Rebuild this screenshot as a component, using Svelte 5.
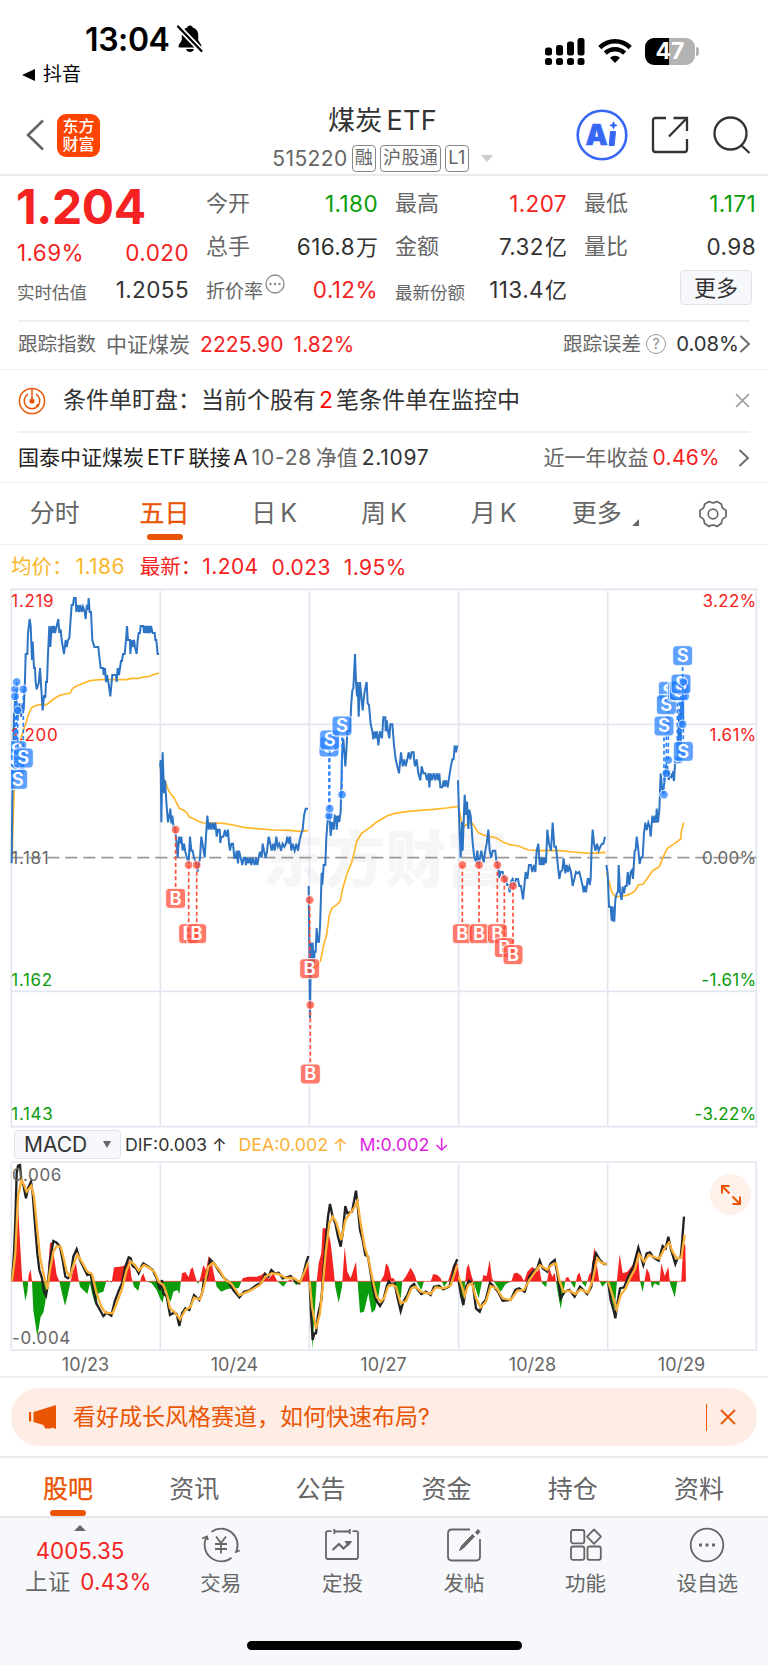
<script>
  const quotes = [
    [
      { label: '今开', value: '1.180', tone: 'down' },
      { label: '总手', value: '616.8', unit: '万' },
      { label: '折价率', value: '0.12%', tone: 'up', info: true }
    ],
    [
      { label: '最高', value: '1.207', tone: 'up' },
      { label: '金额', value: '7.32', unit: '亿' },
      { label: '最新份额', value: '113.4', unit: '亿' }
    ],
    [
      { label: '最低', value: '1.171', tone: 'down' },
      { label: '量比', value: '0.98' }
    ]
  ];

  const bottomTabs = ['股吧', '资讯', '公告', '资金', '持仓', '资料'];
  const dates = ['10/23', '10/24', '10/27', '10/28', '10/29'];

  let period = '五日';
  let section = '股吧';

  // Chart coordinates are in thirds of a pixel, one polyline per session
  const dayLines = [481, 928, 1376, 1823];

  const price = [
    '35,850 37,660 42,400 48,330 52,420 58,370 63,410 68,370 71,391 75,300 77,222 82,222 84,159 89,117 92,138 96,240 98,185 102,264 105,264 107,306 110,328 116,310 120,264 124,328 128,391 132,349 136,350 138,306 141,306 144,222 148,138 151,201 155,138 158,159 162,138 165,159 170,138 175,117 178,159 182,148 185,180 192,222 197,180 200,201 204,180 208,175 212,117 215,75 219,75 222,54 227,54 229,96 233,75 237,96 241,75 245,96 249,80 254,96 257,117 260,80 264,85 266,54 269,96 273,96 277,180 283,201 295,201 297,222 302,264 309,264 311,285 315,264 318,306 321,285 325,306 331,349 337,285 348,285 350,306 353,264 357,285 360,264 363,243 366,243 369,222 374,222 378,180 381,138 384,180 390,180 391,222 395,180 398,201 402,180 405,201 410,222 413,180 416,159 420,159 422,138 430,138 432,159 435,138 438,159 441,138 444,159 447,138 450,159 453,138 458,159 464,159 466,180 469,180 473,222 477,222',
    '480,560 482,540 484,727 488,517 492,640 495,601 500,680 504,727 508,707 511,686 514,730 517,707 520,735 523,740 528,770 533,833 537,770 541,791 544,770 548,812 552,791 556,815 561,833 566,850 570,770 574,812 578,812 582,833 588,850 593,875 600,833 604,770 609,800 614,833 618,770 622,707 626,749 630,728 634,749 638,728 642,749 646,728 650,770 654,749 659,749 661,789 664,770 670,770 675,750 679,770 684,749 687,791 690,812 694,791 699,791 703,833 707,833 710,812 714,850 717,812 722,833 727,855 731,833 735,833 738,855 742,833 746,850 750,833 754,855 758,833 764,855 768,833 772,855 776,833 780,815 785,833 788,791 792,812 797,833 801,815 806,770 811,791 815,812 820,791 824,812 829,770 833,800 838,791 843,812 848,791 853,800 858,791 862,770 866,791 870,770 874,812 878,791 884,812 889,791 894,812 899,780 904,760 908,749 912,707 917,686 924,686',
    '926,918 929,1220 930,1315 933,1088 936,1157 938,1088 941,1157 944,1115 947,1115 950,1044 953,1085 957,1085 960,1041 962,980 965,878 967,914 971,855 976,855 979,772 984,710 988,694 992,768 996,726 1001,749 1004,707 1008,710 1010,749 1014,707 1018,726 1022,694 1024,620 1026,525 1030,475 1032,505 1036,559 1039,515 1042,454 1050,452 1054,368 1057,331 1060,326 1065,222 1068,305 1071,349 1073,306 1076,410 1080,306 1084,349 1088,391 1092,349 1095,328 1100,306 1103,370 1107,375 1112,433 1117,454 1120,478 1124,454 1128,475 1131,454 1135,496 1140,454 1146,475 1150,412 1156,412 1157,454 1160,420 1164,454 1168,475 1171,433 1177,433 1182,495 1187,538 1192,559 1197,580 1203,517 1208,559 1213,538 1217,559 1222,538 1226,517 1231,538 1235,517 1241,517 1242,538 1245,559 1250,538 1255,580 1261,601 1265,559 1270,580 1276,580 1281,601 1286,580 1288,622 1292,580 1296,601 1301,580 1306,601 1310,580 1315,601 1318,580 1321,622 1327,622 1331,601 1334,620 1338,601 1343,622 1346,601 1352,562 1357,538 1361,538 1364,496 1368,517 1372,496',
    '1374,601 1378,736 1382,833 1386,726 1388,812 1391,726 1394,644 1398,705 1401,665 1405,747 1408,689 1412,707 1415,747 1418,789 1423,833 1428,843 1432,812 1436,855 1440,833 1444,812 1448,833 1451,847 1456,812 1460,791 1465,749 1469,812 1474,833 1478,812 1486,812 1489,843 1494,855 1498,894 1502,876 1508,876 1513,896 1517,896 1521,915 1526,915 1529,937 1533,905 1538,897 1543,918 1548,897 1554,897 1558,918 1563,918 1569,958 1573,918 1577,876 1582,897 1587,855 1593,855 1597,876 1602,855 1606,876 1610,812 1615,791 1619,855 1623,833 1625,855 1628,833 1631,855 1634,833 1638,850 1642,749 1647,791 1653,812 1658,728 1663,800 1668,800 1673,850 1678,897 1682,875 1687,870 1691,835 1696,880 1700,855 1704,876 1708,860 1713,876 1718,918 1723,897 1728,876 1733,880 1738,876 1743,897 1748,918 1751,937 1754,918 1758,937 1763,897 1766,897 1769,915 1772,897 1775,800 1778,749 1782,791 1786,812 1791,791 1796,812 1801,800 1806,791 1810,791 1815,770',
    '1819,855 1823,880 1827,980 1832,980 1835,1022 1838,980 1840,1022 1843,1022 1846,960 1850,940 1854,935 1856,855 1860,935 1865,960 1868,920 1872,940 1876,918 1880,918 1883,876 1888,915 1892,876 1896,870 1899,897 1904,812 1907,810 1910,770 1914,800 1919,852 1923,833 1928,830 1932,760 1936,728 1940,750 1945,728 1949,740 1952,770 1957,707 1962,728 1965,707 1968,728 1970,686 1974,727 1978,690 1982,580 1986,622 1989,640 1994,600 1998,560 2002,560 2006,600 2010,580 2014,590 2018,580 2022,603 2026,540 2032,540 2038,400 2042,500 2044,340 2048,300 2050,433'
  ];

  const average = [
    '37,830 38,770 42,640 46,570 55,510 62,480 70,450 78,430 85,405 95,383 105,377 120,374 140,374 150,366 165,354 180,346 195,342 210,340 218,325 230,318 250,310 270,302 300,299 340,299 380,299 395,295 415,295 430,291 445,290 460,284 477,279',
    '480,560 488,590 496,605 505,630 512,642 520,650 528,665 538,685 550,690 560,698 568,711 580,716 595,724 610,729 640,729 670,730 700,735 730,742 770,746 820,750 870,751 900,754 924,752',
    '930,1136 940,1163 952,1157 962,1141 970,1099 980,1063 988,1005 996,984 1008,976 1020,965 1028,926 1040,884 1055,847 1062,821 1070,784 1085,760 1110,742 1130,726 1150,715 1160,708 1185,700 1220,695 1260,691 1300,688 1340,684 1373,679',
    '1374,679 1380,700 1387,747 1395,737 1405,731 1416,729 1425,742 1435,758 1450,765 1470,770 1490,774 1510,787 1530,794 1555,798 1585,810 1620,812 1650,811 1680,812 1720,816 1770,820 1817,817',
    '1819,876 1826,900 1835,935 1845,950 1860,949 1880,946 1895,940 1905,932 1915,915 1930,912 1940,898 1958,872 1978,860 1990,830 2002,805 2020,793 2042,777 2044,755 2051,727'
  ];

  // x, y of the trade and y of its badge
  const trades = [
    { type: 'S', x: 45, y: 328, badge: 534 },
    { type: 'S', x: 45, y: 349, badge: 555 },
    { type: 'S', x: 50, y: 306, badge: 512 },
    { type: 'S', x: 53, y: 391, badge: 598 },
    { type: 'S', x: 70, y: 328, badge: 534 },
    { type: 'B', x: 527, y: 749, badge: 955 },
    { type: 'B', x: 566, y: 855, badge: 1061 },
    { type: 'B', x: 590, y: 855, badge: 1061 },
    { type: 'B', x: 929, y: 960, badge: 1166 },
    { type: 'B', x: 931, y: 1275, badge: 1482 },
    { type: 'S', x: 987, y: 707, badge: 501 },
    { type: 'S', x: 989, y: 686, badge: 480 },
    { type: 'S', x: 1026, y: 644, badge: 438 },
    { type: 'B', x: 1387, y: 855, badge: 1061 },
    { type: 'B', x: 1437, y: 855, badge: 1061 },
    { type: 'B', x: 1492, y: 855, badge: 1061 },
    { type: 'B', x: 1513, y: 897, badge: 1103 },
    { type: 'B', x: 1539, y: 918, badge: 1124 },
    { type: 'S', x: 2005, y: 540, badge: 334 },
    { type: 'S', x: 1999, y: 580, badge: 374 },
    { type: 'S', x: 1992, y: 644, badge: 438 },
    { type: 'S', x: 2032, y: 540, badge: 334 },
    { type: 'S', x: 2038, y: 538, badge: 332 },
    { type: 'S', x: 2043, y: 519, badge: 312 },
    { type: 'S', x: 2048, y: 433, badge: 227 },
    { type: 'S', x: 2050, y: 306, badge: 514 }
  ];

  const dif = [
    '36,484 42,400 46,300 50,160 54,137 60,135 64,180 70,195 78,235 84,205 93,185 98,220 104,300 112,400 118,450 126,475 132,515 138,527 144,490 150,420 160,363 170,368 180,380 188,420 196,470 204,475 212,465 220,410 230,388 240,420 252,445 262,465 272,462 280,510 290,552 300,570 310,588 320,578 334,587 344,545 355,515 366,490 376,440 386,412 392,415 398,438 408,445 416,460 424,440 430,430 442,438 458,450 470,475 480,510 486,480 490,520 500,530 510,585 522,578 530,582 538,618 546,580 556,565 568,570 582,525 598,540 606,520 612,480 620,475 630,418 642,430 655,450 670,472 685,485 700,510 718,532 732,515 750,510 770,495 785,488 795,462 805,470 814,450 824,460 836,458 848,475 860,472 872,468 885,482 898,490 908,470 918,430 925,408',
    '929,484 933,580 938,660 943,640 948,640 954,585 964,540 970,460 976,380 984,290 990,252 998,290 1006,310 1014,350 1022,380 1028,340 1036,258 1042,280 1056,275 1068,212 1072,245 1080,330 1088,360 1096,405 1104,410 1112,460 1120,510 1128,540 1140,558 1150,540 1160,500 1166,484 1174,492 1184,490 1192,530 1202,573 1210,545 1222,525 1232,500 1242,492 1254,510 1264,522 1277,515 1292,525 1302,500 1317,497 1330,508 1347,500 1355,480 1362,440 1372,418',
    '1376,484 1384,530 1390,555 1398,500 1407,482 1418,490 1428,565 1439,575 1448,550 1457,540 1470,488 1480,498 1494,515 1508,542 1532,540 1546,510 1557,505 1574,515 1588,470 1602,452 1612,445 1619,422 1628,445 1642,455 1652,430 1664,420 1672,460 1682,535 1694,515 1708,510 1724,530 1740,500 1762,522 1774,500 1780,430 1788,400 1800,420 1812,432 1820,432',
    '1824,484 1832,540 1842,575 1846,595 1852,550 1860,505 1872,502 1887,465 1900,440 1915,383 1930,435 1940,400 1950,397 1960,412 1976,422 1988,378 1997,385 2005,350 2012,385 2026,432 2032,415 2042,412 2046,370 2052,290'
  ];

  const dea = [
    '36,484 46,400 54,230 64,180 72,195 80,215 94,197 102,230 112,330 120,410 130,460 142,508 150,450 160,395 170,378 182,380 190,410 200,455 210,470 222,430 232,403 245,425 262,455 276,462 290,520 304,560 316,578 338,580 348,555 365,510 380,450 392,425 405,435 416,452 432,435 450,445 465,458 476,485 490,495 500,520 510,565 524,576 540,598 556,570 572,560 582,533 600,538 612,500 625,440 640,428 658,450 675,478 695,492 718,526 750,512 780,495 796,470 815,460 835,462 858,474 880,474 900,487 912,460 924,428',
    '929,484 936,560 948,626 960,580 968,500 978,390 988,310 998,290 1008,305 1024,360 1036,300 1050,280 1062,265 1072,243 1082,310 1094,380 1106,420 1118,480 1130,530 1142,545 1152,535 1164,500 1177,494 1188,500 1202,550 1218,543 1234,505 1247,500 1262,515 1292,522 1307,502 1332,505 1352,496 1362,465 1372,435',
    '1376,470 1386,500 1394,527 1404,495 1416,490 1428,535 1442,562 1458,545 1472,498 1490,505 1508,535 1532,540 1552,512 1572,510 1588,480 1602,460 1620,435 1642,450 1654,435 1668,430 1678,480 1690,515 1708,512 1726,522 1742,508 1764,518 1778,480 1792,415 1804,428 1820,433',
    '1824,484 1836,520 1850,568 1862,525 1877,505 1892,470 1904,450 1917,403 1932,425 1947,405 1964,412 1978,416 1992,388 2007,368 2018,395 2030,415 2044,412 2054,345'
  ];

  const histogram = '36,484 44,380 52,220 58,330 66,470 70,500 76,542 82,515 86,465 92,448 96,484 100,570 112,650 122,590 130,578 136,545 142,484 150,370 157,366 162,410 170,465 178,484 186,520 195,557 202,530 212,484 220,450 228,430 234,470 240,500 252,512 262,522 270,490 276,520 286,555 295,520 310,515 320,480 335,488 342,442 360,440 378,436 388,420 394,470 402,500 415,512 424,470 430,460 438,484 455,490 470,510 480,535 488,548 495,510 512,545 520,515 532,510 538,522 546,460 556,456 566,472 572,448 578,442 586,470 594,494 602,470 610,435 618,450 626,408 634,420 642,465 650,500 664,515 680,508 700,504 716,505 728,475 745,470 770,470 785,465 795,455 805,478 820,460 832,484 850,500 862,484 872,478 890,496 905,478 918,450 925,430 929,484 933,600 937,688 943,590 950,484 956,430 964,400 968,325 978,325 986,340 992,370 1000,440 1006,500 1016,548 1026,500 1034,380 1042,455 1052,475 1060,450 1068,425 1074,500 1080,578 1092,575 1105,520 1115,578 1125,570 1135,530 1142,484 1152,465 1158,430 1166,440 1174,475 1182,475 1190,510 1202,535 1207,484 1217,470 1232,443 1244,465 1252,490 1264,510 1272,484 1292,484 1300,462 1312,465 1322,475 1332,500 1344,484 1352,460 1360,435 1372,430 1380,484 1387,565 1394,500 1400,445 1406,432 1414,465 1422,490 1436,535 1444,495 1450,465 1460,468 1469,420 1476,475 1484,488 1502,515 1517,492 1534,484 1542,460 1552,458 1564,468 1572,484 1582,455 1597,440 1612,455 1618,445 1626,490 1638,502 1648,445 1657,470 1664,458 1672,510 1682,567 1690,520 1697,475 1704,470 1714,490 1724,505 1732,465 1739,458 1747,490 1757,500 1767,465 1774,455 1783,380 1790,430 1797,480 1807,500 1818,488 1824,484 1832,530 1844,570 1852,470 1859,403 1868,460 1882,455 1902,430 1914,400 1920,484 1928,516 1934,480 1940,445 1948,460 1956,505 1964,490 1978,497 1984,430 1994,468 2005,440 2010,490 2024,532 2032,484 2044,484 2050,370 2056,375 2058,484';
</script>

<div class="app">
  <header class="status">
    <div class="status-left">
      <div class="clock">
        <span>13:04</span>
        <svg width="28" height="30" viewBox="0 0 28 30">
          <path d="M14 1.500c-1.800 0-2.600 1.100-2.700 2.100C7.500 4.700 5.800 7.600 5.800 11v4.500c0 2-3.300 4.200-3.300 6.700 0 .9.700 1.300 1.500 1.300h20c.8 0 1.500-.4 1.500-1.300 0-2.500-3.300-4.700-3.300-6.700V11c0-3.400-1.700-6.300-5.500-7.400-.1-1-.9-2.100-2.700-2.100z" />
          <path d="M10 25h8c-.5 2-2 3-4 3s-3.500-1-4-3z" />
          <path d="M2 2.500L25.500 27" stroke="#fff" stroke-width="5.500" />
          <path d="M2 2.500L25.500 27" stroke="#000" stroke-width="2.200" stroke-linecap="round" />
        </svg>
      </div>
      <div class="return"><i></i>抖音</div>
    </div>
    <div class="status-right">
      <svg width="40" height="28" viewBox="0 0 40 28">
        <rect x="0" y="9.500" width="7" height="8" rx="2.500" />
        <rect x="11" y="7" width="7" height="10.500" rx="2.500" />
        <rect x="22" y="3.500" width="7" height="14" rx="2.500" />
        <rect x="32.500" y="0" width="7" height="17.500" rx="2.500" />
        <rect x="0" y="20" width="7" height="7" rx="2.500" />
        <rect x="11" y="20" width="7" height="7" rx="2.500" />
        <rect x="22" y="20" width="7" height="7" rx="2.500" />
        <rect x="32.500" y="20" width="7" height="7" rx="2.500" />
      </svg>
      <svg class="wifi" width="34" height="26" viewBox="0 0 34 26" fill="none" stroke="#000" stroke-width="4.600">
        <path d="M1.800 9.600a21.500 21.500 0 0 1 30.400 0" />
        <path d="M7.400 15.200a13.600 13.600 0 0 1 19.200 0" />
        <path d="M17 25l-5-5.200a7 7 0 0 1 10 0z" fill="#000" stroke="none" />
      </svg>
      <div class="battery"><span>47</span></div>
      <i class="battery-cap"></i>
    </div>
  </header>

  <nav class="nav">
    <svg class="back" width="20" height="32" viewBox="0 0 20 32" fill="none" stroke="#666" stroke-width="2.600">
      <path d="M18 1.500L3 16l15 14.500" />
    </svg>
    <div class="logo"><span>东方</span><span>财富</span></div>
    <div class="title">
      <h1>煤炭 <span>ETF</span></h1>
      <p>515220 <b>融</b><b>沪股通</b><b>L1</b><i></i></p>
    </div>
    <svg width="52" height="52" viewBox="0 0 52 52">
      <circle cx="26" cy="26" r="24.300" fill="#fff" stroke="#3767f5" stroke-width="2.600" />
      <text class="ai" x="9.500" y="35.500">A</text>
      <path d="M34.500 22.500h5l-1.300 14h-5z" fill="#3767f5" stroke="#3767f5" stroke-linejoin="round" />
      <path d="M37.500 12l1.400 2.900 2.900 1.400-2.900 1.400-1.400 2.900-1.400-2.900-2.900-1.400 2.900-1.400z" fill="#3767f5" />
    </svg>
    <svg class="share" width="38" height="38" viewBox="0 0 38 38" fill="none" stroke="#333" stroke-width="2.300">
      <path d="M15 2H4.500Q2 2 2 4.500v29Q2 36 4.500 36h29q2.500 0 2.500-2.500V23" />
      <path d="M22.500 2H36v13M36 2L18 20.500" />
    </svg>
    <svg class="search" width="38" height="38" viewBox="0 0 38 38" fill="none" stroke="#333" stroke-width="2.300">
      <circle cx="17.500" cy="17.500" r="16" />
      <path d="M28 29l8.500 8" />
    </svg>
  </nav>

  <section class="quote">
    <div class="last">
      <strong>1.204</strong>
      <div class="pair up"><span>1.69%</span><span>0.020</span></div>
      <div class="pair"><em>实时估值</em><span>1.2055</span></div>
    </div>
    {#each quotes as column}
      <div class="column">
        {#each column as item}
          <div class="pair">
            <em class:mid={item.label.length === 3} class:small={item.label.length === 4}>
              {item.label}{#if item.info}<svg width="20" height="20" viewBox="0 0 20 20">
                  <circle cx="10" cy="10" r="9" fill="none" stroke="#888" stroke-width="1.300" />
                  <circle cx="5.500" cy="10" r="1.200" /><circle cx="10" cy="10" r="1.200" /><circle cx="14.500" cy="10" r="1.200" />
                </svg>{/if}
            </em>
            <span class={item.tone}>{item.value}{#if item.unit}<u>{item.unit}</u>{/if}</span>
          </div>
        {/each}
        {#if column.length === 2}
          <button class="more">更多</button>
        {/if}
      </div>
    {/each}
  </section>

  <section class="track">
    <span>跟踪指数</span>
    <span class="name">中证煤炭</span>
    <span class="num up">2225.90</span>
    <span class="num up">1.82%</span>
    <div class="right">
      <span>跟踪误差</span>
      <span class="help">?</span>
      <span class="num dark">0.08%</span>
      <svg width="12" height="18" viewBox="0 0 12 18" fill="none" stroke="#666" stroke-width="1.800"><path d="M1.500 1L10 9l-8.500 8" /></svg>
    </div>
  </section>

  <section class="alert">
    <svg width="28" height="28" viewBox="0 0 28 28" fill="none" stroke="#ea5504" stroke-width="1.500">
      <circle cx="14" cy="14" r="12.600" />
      <path d="M14 1.500v12M10 7.200a7.800 7.800 0 1 0 8 0" />
      <circle cx="14" cy="14" r="1.800" fill="#ea5504" />
      <circle cx="19.500" cy="18.500" r="1.500" fill="#ea5504" stroke="none" />
    </svg>
    <p>条件单盯盘：当前个股有<b>2</b>笔条件单在监控中</p>
    <svg width="15" height="15" viewBox="0 0 15 15" stroke="#999" stroke-width="1.600"><path d="M1 1l13 13M14 1L1 14" /></svg>
  </section>

  <section class="fund">
    <span class="fund-name">国泰中证煤炭 <i>ETF</i> 联接 <i>A</i></span>
    <span class="date">10-28</span>
    <span class="grey">净值</span>
    <span class="nav-value">2.1097</span>
    <div class="right">
      <span class="grey">近一年收益</span>
      <span class="up">0.46%</span>
      <svg width="12" height="18" viewBox="0 0 12 18" fill="none" stroke="#666" stroke-width="1.800"><path d="M1.500 1L10 9l-8.500 8" /></svg>
    </div>
  </section>

  <div class="tabs">
    {#each ['分时', '五日', '日 K', '周 K', '月 K', '更多'] as tab}
      <button class:active={period === tab} class:has-more={tab === '更多'} on:click={() => (period = tab)}>{tab}</button>
    {/each}
    <div class="gear">
      <svg width="30" height="30" viewBox="0 0 30 30" fill="none" stroke="#666" stroke-width="1.700" stroke-linejoin="round">
        <path d="M11 2.500q4 2.600 8 0l4.500 2.700q0 4.400 4.500 6v6.600q-4.500 1.600-4.500 6.500L19 27.500q-4-2.600-8 0l-4.500-3.200q0-4.900-4.500-6.500v-6.600q4.500-1.600 4.500-6z" />
        <circle cx="15" cy="15" r="4.800" />
      </svg>
    </div>
  </div>

  <div class="legend">
    <span class="avg">均价：<b>1.186</b></span>
    <span>最新：<b>1.204</b></span>
    <b>0.023</b>
    <b>1.95%</b>
  </div>

  <svg class="chart" width="768" height="540" viewBox="0 24 2304 1620">
    <text class="watermark" x="1155" y="905">东方财富</text>
    <g class="grid">
      <path d="M34 28H2269V1640H34z" />
      {#each dayLines as x}
        <path d="M{x} 33V1636" />
      {/each}
      <path d="M34 433H2269M34 1234H2269" />
    </g>
    <path d="M34 833H2269" stroke="#999" stroke-width="5" stroke-dasharray="36 18" />
    {#each average as points}
      <polyline {points} fill="none" stroke="#ffb629" stroke-width="5" />
    {/each}
    {#each price as points}
      <polyline {points} fill="none" stroke="#2d74c4" stroke-width="6" />
    {/each}
    <g class="axis">
      <text class="red" x="34" y="80">1.219</text>
      <text class="red" x="34" y="483">1.200</text>
      <text x="34" y="851">1.181</text>
      <text class="green" x="34" y="1217">1.162</text>
      <text class="green" x="34" y="1621">1.143</text>
    </g>
    <g class="axis end">
      <text class="red" x="2270" y="80">3.22%</text>
      <text class="red" x="2270" y="483">1.61%</text>
      <text x="2270" y="851">0.00%</text>
      <text class="green" x="2270" y="1217">-1.61%</text>
      <text class="green" x="2270" y="1621">-3.22%</text>
    </g>
    <clipPath id="plot"><rect x="33" y="24" width="2238" height="1620" /></clipPath>
    <g clip-path="url(#plot)">
      {#each trades as trade}
        <g class="trade {trade.type}">
          <path d="M{trade.x} {trade.y}V{trade.badge + (trade.badge > trade.y ? -30 : 30)}" />
          <circle cx={trade.x} cy={trade.y} r="13" />
          <rect x={trade.x - 30} y={trade.badge - 30} width="60" height="60" rx="11" />
          <text x={trade.x} y={trade.badge + 19}>{trade.type}</text>
        </g>
      {/each}
    </g>
  </svg>

  <div class="indicator">
    <button>MACD<i></i></button>
    <span>DIF:0.003</span><b>↑</b>
    <span class="dea">DEA:0.002</span><b class="dea">↑</b>
    <span class="macd">M:0.002</span><b class="macd">↓</b>
  </div>

  <div class="macd-wrap">
    <svg width="768" height="190" viewBox="0 123 2304 570">
      <g class="grid">
        <path d="M34 126H2269V691H34z" />
        {#each dayLines as x}
          <path d="M{x} 132V688" />
        {/each}
      </g>
      <clipPath id="above"><rect x="0" y="123" width="2304" height="361" /></clipPath>
      <clipPath id="below"><rect x="0" y="484" width="2304" height="209" /></clipPath>
      <polygon points={histogram} fill="#f52222" clip-path="url(#above)" />
      <polygon points={histogram} fill="#0a9c0a" clip-path="url(#below)" />
      <path d="M36 484H2058" stroke="#f52222" stroke-width="2" />
      {#each dif as points}
        <polyline {points} fill="none" stroke="#222" stroke-width="7" />
      {/each}
      {#each dea as points}
        <polyline {points} fill="none" stroke="#f9b036" stroke-width="7" />
      {/each}
      <g class="axis">
        <text x="36" y="184">0.006</text>
        <text x="36" y="672">-0.004</text>
      </g>
    </svg>
    <div class="expand">
      <svg width="22" height="22" viewBox="0 0 22 22" fill="none" stroke="#ea5504" stroke-width="2">
        <path d="M9.500 2H2v7.500M2 2l7.500 7.500M12.500 20H20v-7.500M20 20l-7.500-7.500" />
      </svg>
    </div>
  </div>

  <div class="dates">
    {#each dates as date}
      <span>{date}</span>
    {/each}
  </div>

  <div class="banner-wrap">
    <div class="banner">
      <svg width="28" height="24" viewBox="0 0 28 24" fill="#ea5504">
        <path d="M0 7h2.200v9.500H0zM4.500 7L27 0v24l-4-1.500-1 1h-6l-1.500-3.500L4.500 17z" />
      </svg>
      <span>看好成长风格赛道，如何快速布局?</span>
      <i></i>
      <svg width="16" height="16" viewBox="0 0 16 16" stroke="#ea5504" stroke-width="1.800"><path d="M1 1l14 14M15 1L1 15" /></svg>
    </div>
  </div>

  <div class="sections">
    {#each bottomTabs as tab}
      <button class:active={section === tab} on:click={() => (section = tab)}>{tab}</button>
    {/each}
  </div>

  <footer>
    <div class="actions">
      <div class="index">
        <i></i>
        <span class="up">4005.35</span>
        <p>上证 <span class="up">0.43%</span></p>
      </div>
      <div class="action">
        <svg width="40" height="36" viewBox="0 0 40 36">
          <path d="M1.200 11.500l4.800-2L7 13M5.800 9.700A16.500 16.500 0 0 0 30.500 30.700M10.500 4.700A16.500 16.500 0 0 1 35.300 24.500M33.800 25.500l5-2" />
          <path d="M15 9.500l5 6.500 5-6.500M20 16v10.500M14 17h12M14 22h12" />
        </svg>
        <span>交易</span>
      </div>
      <div class="action">
        <svg width="40" height="36" viewBox="0 0 40 36">
          <path d="M9.500 4.200H6Q4 4.200 4 6v24q0 2 2 2h28q2 0 2-2V6q0-1.800-2-1.800h-3.500M12.300 4.500h15.400M12.300 2v5M27.700 2v5" />
          <path d="M10.500 23l6.500-6 4.500 4.500 7.500-7" stroke-width="2.200" />
          <path d="M22.500 14h7.500l-4 5.500z" fill="#666" stroke="none" />
        </svg>
        <span>定投</span>
      </div>
      <div class="action">
        <svg width="40" height="36" viewBox="0 0 40 36">
          <path d="M26 2.500H8Q4 2.500 4 6.500v23q0 4 4 4h24q4 0 4-4V12" />
          <path d="M15.500 23.500l2-4.500 11-11.500 2 2-11 11.500zM31.500 5.500l2.500-3 2 2-2.500 3z" fill="#666" stroke-width="1" />
        </svg>
        <span>发帖</span>
      </div>
      <div class="action">
        <svg width="40" height="36" viewBox="0 0 40 36">
          <rect x="5" y="3" width="13.300" height="13.300" rx="2" />
          <rect x="5" y="19.500" width="13.300" height="13.300" rx="2" />
          <rect x="21.500" y="19.500" width="13.300" height="13.300" rx="2" />
          <path d="M28 2.500l7 7.200-7 7.200-7-7.200z" stroke-linejoin="round" />
        </svg>
        <span>功能</span>
      </div>
      <div class="action">
        <svg width="40" height="36" viewBox="0 0 40 36">
          <circle cx="20" cy="18" r="16.300" />
          <path d="M12 18h3M18.500 18h3M25 18h3" stroke-width="3" />
        </svg>
        <span>设自选</span>
      </div>
    </div>
    <div class="home"></div>
  </footer>
</div>

<style>
  :global(body) {
    margin: 0;
    background: #fff;
  }

  .app {
    width: 768px;
    height: 1665px;
    overflow: hidden;
    display: flex;
    flex-direction: column;
    background: #fff;
    color: #333;
    font-family: Inter, "Noto Sans CJK SC", sans-serif;
    font-size: 21px;
    line-height: 1;
  }

  .app > * {
    box-sizing: border-box;
    flex-shrink: 0;
  }

  svg {
    display: block;
    flex-shrink: 0;
  }

  button {
    font: inherit;
    color: inherit;
    background: none;
    border: 0;
    padding: 0;
  }

  p, h1 {
    margin: 0;
    font-weight: 400;
  }

  i, em {
    font-style: normal;
  }

  .up {
    color: #f52222;
  }

  .down {
    color: #0a9c0a;
  }

  .right {
    margin-left: auto;
    display: flex;
    align-items: center;
  }

  /* status bar */
  .status {
    height: 97px;
    display: flex;
    justify-content: space-between;
    color: #000;
  }

  .status-left {
    padding-top: 24px;
  }

  .clock {
    display: flex;
    align-items: center;
    height: 32px;
    padding-left: 85px;
    font-size: 32px;
    font-weight: 600;
    gap: 6px;
  }

  .clock span {
    width: 85px;
    letter-spacing: -0.4px;
  }

  .clock svg {
    margin-top: -2px;
  }

  .return {
    display: flex;
    align-items: center;
    gap: 8px;
    padding-left: 22px;
    margin-top: 9px;
    font-size: 19px;
  }

  .return i {
    border: 6.5px solid transparent;
    border-right: 13px solid #000;
    border-left: 0;
  }

  .status-right {
    display: flex;
    padding: 38px 69px 0 0;
  }

  .wifi {
    margin: 0 13px 0 13px;
  }

  .battery {
    width: 50px;
    height: 27px;
    border-radius: 9px;
    background: linear-gradient(90deg, #000 47%, #b3b3b3 47%);
    color: #fff;
    font-size: 23px;
    font-weight: 700;
    line-height: 27px;
    text-align: center;
  }

  .battery-cap {
    width: 3px;
    height: 9px;
    margin: 9px 0 0 1px;
    border-radius: 0 3px 3px 0;
    background: #b3b3b3;
  }

  /* title bar */
  .nav {
    height: 79px;
    display: flex;
    align-items: center;
    padding: 0 17px 1px 25px;
    border-bottom: 2px solid #ececec;
  }

  .logo {
    width: 43px;
    height: 43px;
    margin-left: 12px;
    border-radius: 9px;
    background: #ff4400;
    color: #fff;
    display: flex;
    flex-direction: column;
    justify-content: center;
    align-items: center;
    font-size: 16px;
    font-weight: 500;
    line-height: 18px;
  }

  .title {
    flex: 1;
    margin: 6px 0 0 89px;
    text-align: center;
  }

  .title h1 {
    font-size: 27px;
    line-height: 34px;
    word-spacing: -4px;
    letter-spacing: 0.3px;
  }

  .title p {
    display: flex;
    justify-content: center;
    align-items: center;
    margin-top: 7px;
    color: #666;
    font-size: 21px;
    letter-spacing: 0.4px;
    gap: 4px;
  }

  .title b {
    box-sizing: border-box;
    height: 27px;
    padding: 0 2px;
    border: 1.500px solid #888;
    border-radius: 4px;
    font-size: 18px;
    font-weight: 400;
    line-height: 23px;
  }

  .title p i {
    margin-left: 8px;
    border: 6px solid transparent;
    border-top: 7px solid #ccc;
    border-bottom: 0;
  }

  .ai {
    font: 900 28px Inter, sans-serif;
    fill: #3767f5;
    stroke: #3767f5;
    stroke-width: 0.5;
  }

  .share {
    margin-left: 23px;
  }

  .search {
    margin-left: 24px;
  }

  /* quote */
  .quote {
    height: 146px;
    display: flex;
    margin: 0 11px 0 17px;
    padding-top: 9px;
  }

  .last {
    width: 172px;
    margin-right: 17px;
  }

  .last strong {
    display: block;
    height: 48px;
    margin-left: -1px;
    color: #f52222;
    font-size: 48px;
    font-weight: 700;
    letter-spacing: -0.4px;
    line-height: 44px;
  }

  .column {
    width: 172px;
    margin-right: 17px;
    display: flex;
    flex-direction: column;
  }

  .column:last-child {
    margin-right: 0;
  }

  .pair {
    display: flex;
    justify-content: space-between;
    align-items: center;
    height: 43px;
    font-size: 22.500px;
    letter-spacing: 0.4px;
    white-space: nowrap;
  }

  .column .pair {
    line-height: 43px;
    margin-top: -3px;
    margin-bottom: 3px;
  }

  .pair em {
    display: flex;
    align-items: center;
    color: #666;
    font-size: 22px;
    letter-spacing: 0;
  }

  .pair em.mid {
    font-size: 19px;
    padding-top: 4px;
  }

  .pair em.mid svg {
    margin: -15px 0 0 2px;
    fill: #888;
  }

  .last .pair em,
  .pair em.small {
    font-size: 17.500px;
    padding-top: 5px;
  }

  .last .pair {
    height: 33px;
  }

  .last .pair.up {
    height: 42px;
    margin-top: -1px;
  }

  .pair u {
    margin-left: 1px;
    letter-spacing: 0;
    font-size: 22px;
    text-decoration: none;
  }

  .more {
    align-self: flex-end;
    width: 72px;
    height: 35px;
    margin: -1px 4px 0 0;
    border: 1.500px solid #dfe2ea;
    border-radius: 4px;
    background: #f7f8fb;
    font-size: 22px;
    line-height: 32px;
  }

  .track {
    display: flex;
    align-items: center;
    height: 50px;
    margin: -2px 0 0;
    padding: 0 17px 0 18px;
    border-bottom: 1px solid #f0f0f0;
    color: #666;
    font-size: 19.500px;
    background: linear-gradient(#f0f0f0, #f0f0f0) 18px 0 / 732px 2px no-repeat;
  }

  .track .name {
    margin-left: 10px;
    font-size: 21px;
  }

  .track .num {
    margin-left: 10px;
    font-size: 21px;
    letter-spacing: 0.1px;
  }

  .track .dark {
    font-size: 20.300px;
    letter-spacing: 0;
  }

  .dark {
    color: #333;
  }

  .help {
    width: 18px;
    height: 18px;
    margin-left: 5px;
    border: 1px solid #999;
    border-radius: 50%;
    font-size: 14px;
    line-height: 18px;
    text-align: center;
    color: #888;
  }

  .alert {
    display: flex;
    align-items: center;
    height: 63px;
    margin: 0 18px;
    border-bottom: 2px solid #f0f0f0;
    font-size: 23px;
  }

  .alert p {
    flex: 1;
    margin-left: 17px;
  }

  .alert b {
    margin: 0 3px;
    color: #f00;
    font-weight: 400;
  }

  .fund {
    display: flex;
    align-items: center;
    height: 50px;
    padding: 0 18px 0 18px;
    border-bottom: 1px solid #f0f0f0;
    white-space: nowrap;
  }

  .fund-name {
    word-spacing: -3px;
    color: #222;
  }

  .fund .date,
  .grey {
    color: #666;
  }

  .fund .date,
  .fund .grey,
  .nav-value,
  .fund .right .up {
    margin-left: 4px;
  }

  .fund .date,
  .nav-value {
    letter-spacing: 0.7px;
  }

  .fund .right .up {
    letter-spacing: 0.3px;
  }

  .fund .right svg {
    margin-left: 18px;
  }

  /* period tabs */
  .tabs {
    display: flex;
    height: 62px;
    border-bottom: 1px solid #f0f0f0;
    color: #666;
    font-size: 25px;
  }

  .tabs button,
  .gear {
    width: 109.700px;
    display: flex;
    justify-content: center;
    align-items: center;
  }

  .tabs button {
    position: relative;
    word-spacing: -3px;
  }

  .sections button {
    position: relative;
  }

  .tabs .active,
  .sections .active {
    color: #ea5504;
    -webkit-text-stroke: 0.3px #ea5504;
  }

  .tabs .active::after,
  .sections .active::after {
    content: '';
    position: absolute;
    left: 50%;
    bottom: 4px;
    width: 36px;
    height: 6px;
    margin-left: -18px;
    border-radius: 3px;
    background: #ea5504;
  }

  .tabs .has-more {
    padding-right: 8px;
    box-sizing: border-box;
  }

  .has-more::after {
    content: '';
    margin: 17px -12px 0 10px;
    border-bottom: 7px solid #666;
    border-left: 7px solid transparent;
  }

  .legend {
    display: flex;
    align-items: center;
    gap: 13px;
    height: 43px;
    padding: 1px 0 0 11px;
    color: #f52222;
    font-size: 20.500px;
  }

  .legend b {
    font-size: 21px;
    font-weight: 400;
    letter-spacing: 0.4px;
  }

  .legend > span b {
    margin-left: 1px;
  }

  .legend .avg b {
    margin-left: 3px;
  }

  .legend .avg {
    margin-right: 2px;
    color: #f9b72e;
  }

  /* charts */
  .chart {
    overflow: visible;
  }

  .grid {
    fill: none;
    stroke: #e2e6f0;
    stroke-width: 5;
  }

  .watermark {
    fill: #f6f6f6;
    font: 900 184px "Noto Sans CJK SC", sans-serif;
    text-anchor: middle;
  }

  .axis {
    fill: #666;
    font: 51px Inter, sans-serif;
    letter-spacing: 2px;
  }

  .end {
    text-anchor: end;
  }

  .end text {
    letter-spacing: 1px;
  }

  .red {
    fill: #f52222;
  }

  .green {
    fill: #0a9c0a;
  }

  .trade path {
    stroke-width: 5;
    stroke-dasharray: 12 8;
  }

  .trade circle,
  .trade rect {
    stroke: #fff;
    stroke-width: 3;
    stroke-opacity: 0.9;
    fill-opacity: 0.75;
  }

  .trade text {
    fill: #fff;
    font: 600 55px Inter, sans-serif;
    text-anchor: middle;
  }

  .B {
    fill: #ff4d3a;
  }

  .B path {
    stroke: #ff4d3a;
  }

  .S {
    fill: #2a82ff;
  }

  .S path {
    stroke: #2a82ff;
  }

  .indicator {
    display: flex;
    align-items: center;
    height: 33px;
    padding: 0 0 0 14px;
    font-size: 17.800px;
  }

  .indicator button {
    box-sizing: border-box;
    width: 107px;
    height: 29px;
    margin-right: 4px;
    padding: 0 9px 0 9px;
    display: flex;
    align-items: center;
    justify-content: space-between;
    border: 1.500px solid #dfe2ea;
    border-radius: 4px;
    background: #f7f8fb;
    font-size: 21px;
  }

  .indicator i {
    border: 4.500px solid transparent;
    border-top: 7px solid #666;
    border-bottom: 0;
  }

  .indicator b {
    margin: 0 11.500px 0 5px;
    font-weight: 400;
  }

  .dea {
    color: #f9b036;
  }

  .macd {
    color: #e01ee0;
  }

  .macd-wrap {
    position: relative;
    height: 190px;
  }

  .expand {
    position: absolute;
    top: 13px;
    right: 17px;
    width: 41px;
    height: 41px;
    border-radius: 50%;
    background: #fef1ea;
    display: flex;
    align-items: center;
    justify-content: center;
  }

  .dates {
    display: flex;
    height: 27px;
    padding: 2px 12px 0 11px;
    align-items: center;
    border-bottom: 2px solid #f0f0f0;
    color: #666;
    font-size: 18px;
  }

  .dates span {
    flex: 1;
    text-align: center;
  }

  .banner-wrap {
    height: 80px;
    padding: 10px 11px;
    border-bottom: 2px solid #ececec;
  }

  .banner {
    display: flex;
    align-items: center;
    height: 58px;
    padding: 0 21px 0 18px;
    border-radius: 28px;
    background: #feede5;
    color: #ea5504;
    font-size: 23px;
  }

  .banner span {
    margin-left: 16px;
  }

  .banner i {
    width: 1.500px;
    height: 27px;
    margin: 0 13px 0 auto;
    background: #ea5504;
  }

  .sections {
    display: flex;
    height: 60px;
    padding: 0 6px 0 5px;
    border-bottom: 2px solid #e8e9ec;
    color: #666;
    font-size: 25px;
  }

  .sections button {
    flex: 1;
    padding-top: 4px;
  }

  .sections .active::after {
    bottom: 0;
  }

  /* bottom bar */
  footer {
    flex: 1;
    display: flex;
    flex-direction: column;
    align-items: center;
    background: #f7f8fb;
    color: #666;
  }

  .actions {
    width: 768px;
    height: 123px;
    display: flex;
  }

  .index {
    width: 160px;
    text-align: center;
    font-size: 22.300px;
  }

  .index i {
    display: block;
    width: 0;
    margin: 7px auto 9px;
    border: 6px solid transparent;
    border-bottom: 6px solid #666;
    border-top: 0;
  }

  .index p {
    margin-top: 9px;
    padding-left: 17px;
    letter-spacing: 0.3px;
    word-spacing: 3px;
    white-space: nowrap;
  }

  .action {
    flex: 1;
    display: flex;
    flex-direction: column;
    align-items: center;
    padding-top: 9px;
    font-size: 20.500px;
  }

  .action svg {
    fill: none;
    stroke: #666;
    stroke-width: 1.800;
    margin-bottom: 11px;
  }

  .home {
    width: 275px;
    height: 9px;
    border-radius: 5px;
    background: #000;
  }
</style>
